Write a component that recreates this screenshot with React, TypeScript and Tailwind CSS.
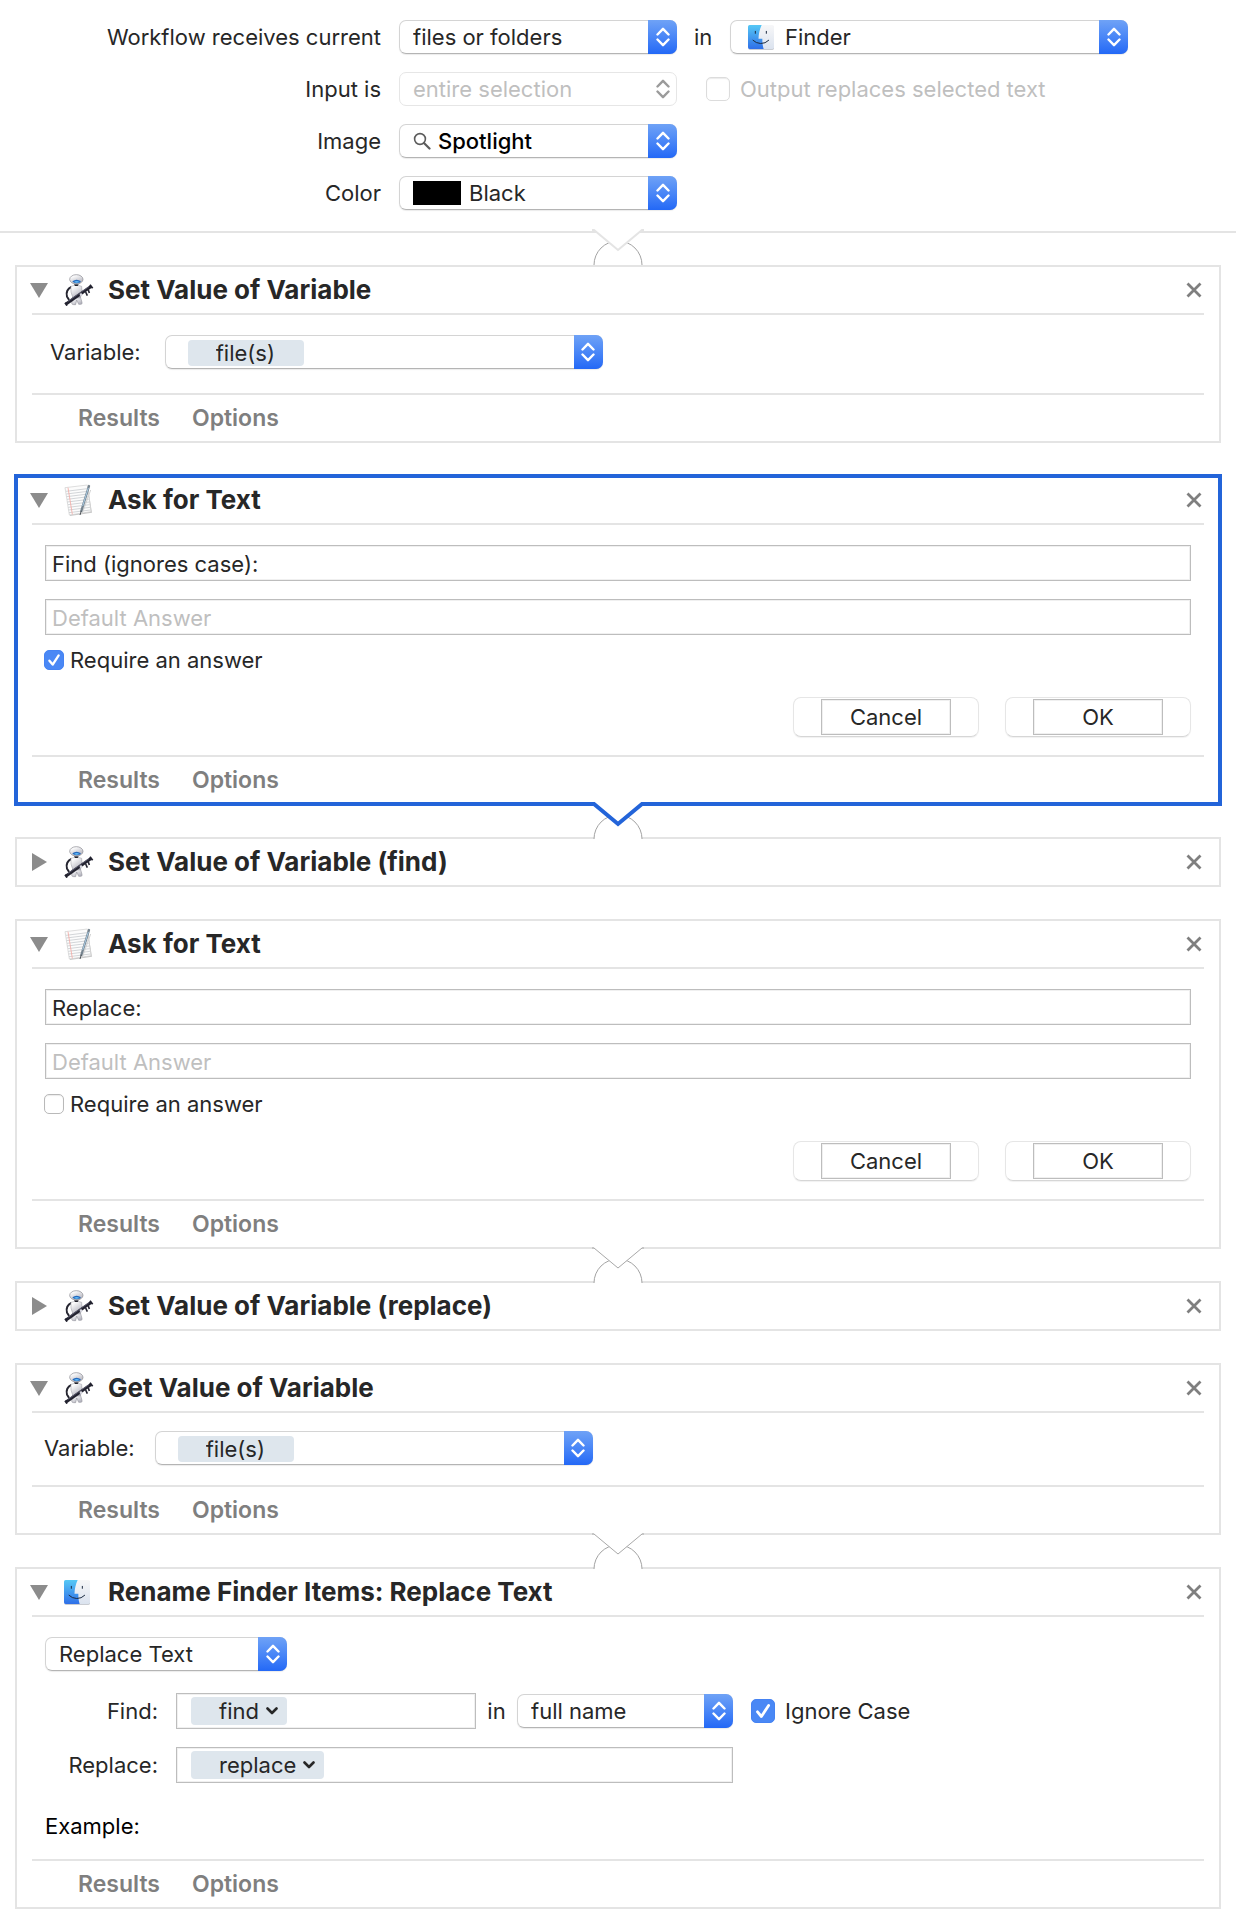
import React, { useId, useState } from 'react';

function Chevrons({ className }: { className: string }) {
  return (
    <svg viewBox="0 0 14 20" className={`h-5 w-[14px] ${className}`} fill="none" stroke="currentColor" strokeWidth="2.4" strokeLinecap="round" strokeLinejoin="round" aria-hidden="true">
      <path d="M1.500 7.500 7 1.800l5.500 5.700M1.500 12.500 7 18.200l5.500-5.700" />
    </svg>
  );
}

function FinderIcon() {
  const id = useId();
  return (
    <svg viewBox="0 0 78 75" className="h-[25px] w-[26px]" aria-hidden="true">
      <defs>
        <linearGradient id={`${id}b`} x1="0" y1="0" x2="0" y2="1">
          <stop offset="0" stopColor="#56c8f5" />
          <stop offset="1" stopColor="#2f6fe8" />
        </linearGradient>
        <linearGradient id={`${id}w`} x1="0" y1="0" x2="0" y2="1">
          <stop offset="0" stopColor="#f7f7f8" />
          <stop offset="1" stopColor="#dbe3ef" />
        </linearGradient>
      </defs>
      <rect x="1" y="3" width="77" height="72" rx="5" fill="#c9ccd2" />
      <rect width="78" height="72" rx="5" fill={`url(#${id}w)`} />
      <path d="M5 0H41C35 13 32 27 31.500 41H43C43 53 44 63 47 72H5Q0 72 0 67V5Q0 0 5 0Z" fill={`url(#${id}b)`} />
      <g fill="none" stroke="#1b2a40" strokeWidth="3" strokeLinecap="round">
        <path d="M22 19v6M55 19v6" />
        <path d="M15 46Q24 55 38 55.500T62 46" />
      </g>
    </svg>
  );
}

function RobotIcon() {
  const id = useId();
  return (
    <svg viewBox="15 12 90 96" className="h-8 w-[30px]" aria-hidden="true">
      <defs>
        <linearGradient id={id} x1="0" y1="0" x2="0.600" y2="1">
          <stop offset="0.200" stopColor="#ffffff" />
          <stop offset="1" stopColor="#b4b4be" />
        </linearGradient>
      </defs>
      <path d="M37 51C26 55 20 67 24 80L29 88" fill="none" stroke="#262631" strokeWidth="6" strokeLinecap="round" />
      <path d="M40 82 38 99q0 5 6 5h6l3-14 6 13h7q5-1 3-6l-5-17Z" fill={`url(#${id})`} stroke="#85858f" strokeWidth="1.500" />
      <path d="M36 49Q52 41 68 49Q72 66 64 84H42Q33 66 36 49Z" fill={`url(#${id})`} stroke="#9a9aa3" strokeWidth="1.500" />
      <path d="M45 43h14l-3 5h-8Z" fill="#23232c" />
      <ellipse cx="52" cy="28" rx="20" ry="14" fill={`url(#${id})`} stroke="#85858d" strokeWidth="2" />
      <path d="M40 34Q53 24 66 34Q63 40 53 40T40 34Z" fill="#2469bd" />
      <path d="M45 36Q53 30 61 36Q53 40 45 36Z" fill="#62bdf8" />
      <path d="m80 66 5 11M88 60l3 9" fill="none" stroke="#262633" strokeWidth="5" />
      <path d="M21 102 97 49" stroke="#22222f" strokeWidth="9" />
      <path d="m18 98 6 9M93 44l8 11" stroke="#22222f" strokeWidth="5" />
      <path d="M26 95 90 50" stroke="#6d6d84" strokeWidth="2" />
      <circle cx="66" cy="74" r="4" fill="#d9d9e2" />
    </svg>
  );
}

function NotepadIcon() {
  return (
    <svg viewBox="192 562 90 96" className="h-8 w-[30px]" aria-hidden="true">
      <path d="M197 577 263 568 276 648 210 658Z" fill="#c9c9c9" />
      <path d="M195 573 262 565 273 645 208 655Z" fill="#fcfcfc" stroke="#cdcdcd" strokeWidth="2" />
      <g stroke="#bcc1c6" strokeWidth="2">
        <path d="M198 584 262 576M199 592l64-8M200 600l64-8M201 608l64-8M202 616l64-8M204 624l64-8M205 632l64-8M206 640l64-8M207 648l64-8" />
      </g>
      <path d="M204 573 217 653" stroke="#f3a9a4" strokeWidth="2.500" />
      <path d="M246 652 272 580" stroke="#d2d2d2" strokeWidth="3" />
      <path d="M267 568 244 643" stroke="#76848f" strokeWidth="7" strokeLinecap="round" />
      <path d="M265 574 248 628" stroke="#a9cbe4" strokeWidth="3" />
      <path d="m244 642-4 13" stroke="#4e5358" strokeWidth="3" />
    </svg>
  );
}

type PopupProps = {
  id: string;
  label?: string;
  value: string;
  width: string;
  pad?: string;
  disabled?: boolean;
  chip?: boolean;
  tone?: string;
  children?: React.ReactNode;
};

function Popup({ id, label, value, width, pad = 'pl-[13px]', disabled, chip, tone = 'text-[#272727]', children }: PopupProps) {
  return (
    <div className={`relative h-[34px] shrink-0 rounded-[7px] bg-white ${width}`}>
      {chip && <span className="absolute left-[23px] top-[5px] h-[26px] w-[116px] rounded-[4px] bg-[#dee6ed]" />}
      {children && <span className="pointer-events-none absolute inset-y-0 left-[14px] flex items-center">{children}</span>}
      <select
        id={id}
        aria-label={label}
        defaultValue={value}
        disabled={disabled}
        className={`relative h-full w-full appearance-none rounded-[7px] border bg-transparent pr-8 opacity-100 outline-none ${pad} ${chip ? 'pt-[2px]' : ''} ${
          disabled ? 'border-[#e6e6e6] text-[#bfbfbf]' : `border-[#d4d4d4] border-b-[#b4b4b4] shadow-[0_1px_1px_rgba(0,0,0,0.080)] ${tone}`
        }`}
      >
        <option>{value}</option>
      </select>
      <span
        className={`pointer-events-none absolute inset-y-0 right-0 flex w-[29px] items-center justify-center rounded-r-[7px] ${
          disabled ? '' : 'bg-linear-to-b from-[#6fa2f6] to-[#2368f6]'
        }`}
      >
        <Chevrons className={disabled ? 'text-[#9b9b9b]' : 'text-white'} />
      </span>
    </div>
  );
}

function Check({ id, size, initial, disabled }: { id: string; size: string; initial?: boolean; disabled?: boolean }) {
  const [on, setOn] = useState(!!initial);
  return (
    <span className={`relative shrink-0 ${size}`}>
      <input
        id={id}
        type="checkbox"
        checked={on}
        disabled={disabled}
        onChange={() => setOn(!on)}
        className={`block h-full w-full appearance-none rounded-[5px] border ${
          disabled ? 'border-[#dcdcdc]' : 'border-[#b9b9b9]'
        } bg-white shadow-[inset_0_1px_1px_rgba(0,0,0,0.080)] checked:border-[#4583f3] checked:bg-[#4a88f5] checked:shadow-none`}
      />
      {on && (
        <svg viewBox="0 0 24 24" className="pointer-events-none absolute inset-0 h-full w-full" fill="none" stroke="white" strokeWidth="2.800" strokeLinecap="round" strokeLinejoin="round" aria-hidden="true">
          <path d="M6.500 12.800 10.400 17.500 17.600 6.500" />
        </svg>
      )}
    </span>
  );
}

function Connector({ color, weight }: { color: string; weight: number }) {
  return (
    <svg viewBox="0 0 56 38" className="pointer-events-none absolute left-1/2 top-full z-10 -mt-1 h-[38px] w-14 -translate-x-1/2" fill="none" aria-hidden="true">
      <path d="M4 38A24 24 0 0 1 52 38Z" fill="white" />
      <path d="M4 38A24 24 0 0 1 52 38" stroke="#a3a3a3" strokeWidth="1" />
      <path d="M4 0V3L28 23 52 3V0Z" fill="white" />
      <path d="M2 3H4L28 23 52 3H54" stroke={color} strokeWidth={weight} />
    </svg>
  );
}

type ActionProps = {
  title: string;
  icon: React.ReactNode;
  collapsed?: boolean;
  selected?: boolean;
  link?: 'selected' | 'plain';
  children?: React.ReactNode;
};

function Action({ title, icon, collapsed, selected, link, children }: ActionProps) {
  return (
    <section className="relative">
      <div className={`border-2 bg-white px-[15px] ${selected ? 'border-transparent outline-4 -outline-offset-3 outline-[#2364d9]' : 'border-[#e4e4e4]'}`}>
        <header className="flex h-[46px] items-center">
          <button type="button" aria-label={collapsed ? 'Expand' : 'Collapse'} aria-expanded={!collapsed} className="-ml-[2px] flex w-[34px] shrink-0 items-center">
            <svg viewBox="0 0 18 18" className="h-[18px] w-[18px] fill-[#8c8c8c]" aria-hidden="true">
              {collapsed ? <path d="M2 0 17 9 2 18Z" /> : <path d="M0 2H18L9 17Z" />}
            </svg>
          </button>
          <span className="flex w-11 shrink-0 items-center">{icon}</span>
          <h2 className="grow text-[26px] leading-[30px] font-bold text-[#272727]">{title}</h2>
          <button type="button" aria-label={`Remove ${title}`} className="mr-[2px] text-[#7f7f7f]">
            <svg viewBox="0 0 16 16" className="h-4 w-4" stroke="currentColor" strokeWidth="2.800" aria-hidden="true">
              <path d="M1.500 1.500 14.500 14.500M14.500 1.500 1.500 14.500" />
            </svg>
          </button>
        </header>
        {!collapsed && (
          <>
            <div className="border-t-2 border-[#e4e4e4]">{children}</div>
            <footer className="flex h-12 items-center gap-8 border-t-2 border-[#e4e4e4] pl-[46px] text-[23px] font-semibold text-[#7f7f7f]">
              <button type="button">Results</button>
              <button type="button">Options</button>
            </footer>
          </>
        )}
      </div>
      {link && <Connector color={link === 'selected' ? '#2364d9' : '#a8a8a8'} weight={link === 'selected' ? 4 : 1} />}
    </section>
  );
}

const field = 'border border-[#bdbdbd] bg-white shadow-[inset_0_0_0_1px_#f0f0f0]';

function AskButton({ children }: { children: string }) {
  return (
    <button type="button" className="flex h-10 w-[186px] items-center justify-center rounded-[8px] border border-[#e6e6e6] border-b-[#d6d6d6] shadow-[0_1px_1px_rgba(0,0,0,0.060)]">
      <span className={`flex h-9 w-[130px] items-center justify-center ${field}`}>{children}</span>
    </button>
  );
}

function AskForText({ id, question, required }: { id: string; question: string; required?: boolean }) {
  return (
    <div className="px-[13px] pt-5 pb-[18px]">
      <div className="flex flex-col gap-[18px]">
        <input aria-label="Question" defaultValue={question} className={`h-9 w-full px-[6px] pt-[2px] outline-none ${field}`} />
        <input aria-label="Default answer" placeholder="Default Answer" className={`h-9 w-full px-[6px] pt-[2px] outline-none placeholder:text-[#bfbfbf] ${field}`} />
      </div>
      <div className="-ml-px mt-[11px] flex h-[28px] items-center gap-[6px]">
        <Check id={id} size="h-5 w-5" initial={required} />
        <label htmlFor={id}>Require an answer</label>
      </div>
      <div className="mt-[23px] flex justify-end gap-[26px]">
        <AskButton>Cancel</AskButton>
        <AskButton>OK</AskButton>
      </div>
    </div>
  );
}

function TokenField({ id, token, width }: { id: string; token: string; width: string }) {
  return (
    <div className={`flex h-9 items-center pl-[14px] ${width} ${field}`}>
      <button type="button" className="flex h-7 shrink-0 items-center gap-[7px] rounded-[4px] bg-[#dee6ed] pr-[9px] pl-7">
        {token}
        <svg viewBox="0 0 12 8" className="h-2 w-3" fill="none" stroke="currentColor" strokeWidth="2.600" strokeLinecap="round" strokeLinejoin="round" aria-hidden="true">
          <path d="M1.500 1.500 6 6l4.500-4.500" />
        </svg>
      </button>
      <input id={id} className="h-full min-w-0 grow bg-transparent outline-none" />
    </div>
  );
}

export default function App() {
  return (
    <main className="bg-white pb-[23px] font-['Inter',sans-serif] text-[22px] leading-[28px] text-[#272727]">
      <form className="relative border-b-2 border-[#e4e4e4] pt-5 pb-[21px]">
        <div className="grid grid-cols-[381px_1fr] items-center gap-x-[18px] gap-y-[18px]">
          <label htmlFor="receives" className="text-right">Workflow receives current</label>
          <div className="flex items-center">
            <Popup id="receives" value="files or folders" width="w-[278px]" />
            <label htmlFor="app" className="w-[53px] pl-[17px]">in</label>
            <Popup id="app" value="Finder" width="w-[398px]" pad="pl-[54px]">
              <span className="pl-1"><FinderIcon /></span>
            </Popup>
          </div>
          <label htmlFor="input" className="text-right">Input is</label>
          <div className="flex items-center">
            <Popup id="input" value="entire selection" width="w-[278px]" disabled />
            <div className="flex items-center gap-[10px] pl-[29px] text-[#bfbfbf]">
              <Check id="output" size="h-6 w-6" disabled />
              <label htmlFor="output">Output replaces selected text</label>
            </div>
          </div>
          <label htmlFor="image" className="text-right">Image</label>
          <Popup id="image" value="Spotlight" width="w-[278px]" pad="pl-[38px]" tone="font-medium text-black">
            <svg viewBox="0 0 18 18" className="h-[18px] w-[18px]" fill="none" stroke="#5c5c5c" strokeWidth="1.600" strokeLinecap="round" aria-hidden="true">
              <circle cx="7" cy="7" r="5.400" />
              <path d="m11 11 5.500 5.500" strokeWidth="2.200" />
            </svg>
          </Popup>
          <label htmlFor="color" className="text-right">Color</label>
          <Popup id="color" value="Black" width="w-[278px]" pad="pl-[69px]">
            <span className="h-6 w-12 bg-black" />
          </Popup>
        </div>
        <Connector color="#e4e4e4" weight={2} />
      </form>

      <div className="mx-[15px] mt-8 flex flex-col gap-8">
        <Action title="Set Value of Variable" icon={<RobotIcon />}>
          <div className="flex items-center gap-6 pt-5 pb-6 pl-[18px]">
            <label htmlFor="set-variable">Variable:</label>
            <Popup id="set-variable" value="file(s)" width="w-[438px]" pad="pl-[50px]" chip />
          </div>
        </Action>

        <Action title="Ask for Text" icon={<NotepadIcon />} selected link="selected">
          <AskForText id="require-find" question="Find (ignores case):" required />
        </Action>

        <Action title="Set Value of Variable (find)" icon={<RobotIcon />} collapsed />

        <Action title="Ask for Text" icon={<NotepadIcon />} link="plain">
          <AskForText id="require-replace" question="Replace:" />
        </Action>

        <Action title="Set Value of Variable (replace)" icon={<RobotIcon />} collapsed />

        <Action title="Get Value of Variable" icon={<RobotIcon />} link="plain">
          <div className="flex items-center gap-5 pt-[18px] pb-5 pl-3">
            <label htmlFor="get-variable">Variable:</label>
            <Popup id="get-variable" value="file(s)" width="w-[438px]" pad="pl-[50px]" chip />
          </div>
        </Action>

        <Action title="Rename Finder Items: Replace Text" icon={<FinderIcon />}>
          <div className="pt-5 pb-[19px] pl-[13px]">
            <Popup id="mode" label="Rename mode" value="Replace Text" width="w-[242px]" />
            <div className="mt-[22px] grid grid-cols-[113px_557px_1fr] items-center gap-x-[18px] gap-y-[18px]">
              <label htmlFor="find" className="text-right">Find:</label>
              <div className="flex items-center">
                <TokenField id="find" token="find" width="w-[300px]" />
                <label htmlFor="scope" className="grow text-center">in</label>
                <Popup id="scope" value="full name" width="w-[216px]" />
              </div>
              <div className="flex items-center gap-[10px]">
                <Check id="ignore" size="h-6 w-6" initial />
                <label htmlFor="ignore">Ignore Case</label>
              </div>
              <label htmlFor="replace" className="text-right">Replace:</label>
              <TokenField id="replace" token="replace" width="w-full" />
            </div>
            <p className="mt-[29px] text-black">Example:</p>
          </div>
        </Action>
      </div>
    </main>
  );
}
